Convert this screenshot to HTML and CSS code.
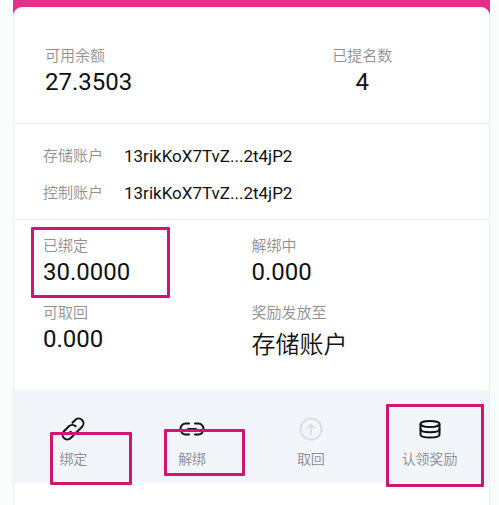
FILE: index.html
```
<!DOCTYPE html>
<html lang="zh-CN">
<head>
  <meta charset="UTF-8" />
  <meta name="viewport" content="width=device-width, initial-scale=1" />
  <title>绑定</title>
  <link rel="stylesheet" href="styles.css">
</head>
<body>
  <main class="page">
    <div class="card">
      <section class="summary">
        <div class="stat">
          <div class="label">可用余额</div>
          <div class="value">27.3503</div>
        </div>
        <div class="stat stat-center">
          <div class="label">已提名数</div>
          <div class="value">4</div>
        </div>
      </section>

      <section class="accounts">
        <div class="account">
          <span class="label">存储账户</span>
          <span class="address">13rikKoX7TvZ...2t4jP2</span>
        </div>
        <div class="account">
          <span class="label">控制账户</span>
          <span class="address">13rikKoX7TvZ...2t4jP2</span>
        </div>
      </section>

      <section class="details">
        <div class="stat">
          <div class="label">已绑定</div>
          <div class="value">30.0000</div>
          <span class="mark mark-bonded"></span>
        </div>
        <div class="stat">
          <div class="label">解绑中</div>
          <div class="value">0.000</div>
        </div>
        <div class="stat">
          <div class="label">可取回</div>
          <div class="value">0.000</div>
        </div>
        <div class="stat">
          <div class="label">奖励发放至</div>
          <div class="value value-text">存储账户</div>
        </div>
      </section>

      <nav class="actions">
        <button class="action" type="button">
          <svg class="icon" viewBox="0 0 26 26">
            <g transform="translate(13 13) rotate(-45)">
              <path d="M4-4.800H8a4.800 4.800 0 0 1 0 9.600H1a4.800 4.800 0 0 1-4.800-4.800" />
              <path d="M-4 4.800H-8a4.800 4.800 0 0 1 0-9.600H-1a4.800 4.800 0 0 1 4.800 4.800" />
            </g>
          </svg>
          绑定
          <span class="mark mark-bond"></span>
        </button>
        <button class="action" type="button">
          <svg class="icon" viewBox="0 0 26 26">
            <path d="M10 7.500H6.500a5 5.500 0 0 0 0 11H10" />
            <path d="M16 7.500h3.500a5 5.500 0 0 1 0 11H16" />
            <path d="M9 13h8" />
          </svg>
          解绑
          <span class="mark mark-unbond"></span>
        </button>
        <button class="action" type="button" disabled>
          <svg class="icon" viewBox="0 0 26 26">
            <circle cx="13" cy="13" r="10.500" />
            <path d="M13 18V9M9.500 12l3.500-3.500 3.500 3.500" />
          </svg>
          取回
        </button>
        <button class="action" type="button">
          <svg class="icon" viewBox="0 0 26 26">
            <ellipse cx="13" cy="8" rx="9.500" ry="3" />
            <path d="M3.500 8v10.500c0 2 4.200 3 9.500 3s9.500-1 9.500-3V8" />
            <path d="M3.500 13c0 2 4.200 3.200 9.500 3.200s9.500-1.200 9.500-3.200" />
          </svg>
          认领奖励
          <span class="mark mark-claim"></span>
        </button>
      </nav>
    </div>
  </main>
</body>
</html>
```

FILE: styles.css
```
* {
  box-sizing: border-box;
}
body {
  margin: 0;
  background: #fbfdfd;
  font-family: Roboto, "Noto Sans CJK SC", sans-serif;
  color: #111;
}
.page {
  min-height: 100vh;
  margin: 0 9px 0 13px;
  padding-top: 7px;
  background: linear-gradient(#e62e8b 16px, #fff 16px);
}
.card {
  min-height: calc(100vh - 7px);
  background: #fff;
  border: solid #edf0f3;
  border-width: 0 1px;
  border-radius: 9px 9px 0 0;
}
.label {
  font-size: 15px;
  font-weight: 350;
  line-height: 22px;
  color: #909090;
}
.value {
  font-size: 24px;
  line-height: 30px;
}
.value-text {
  padding-top: 6px;
  font-weight: 350;
}
.stat {
  position: relative;
}
.stat-center {
  text-align: center;
}
.summary {
  display: grid;
  grid-template-columns: 7fr 8fr;
  padding: 38px 0 26px;
  border-bottom: 1px solid #e8ebee;
}
.summary .stat:first-child {
  padding-left: 31px;
}
.accounts {
  display: grid;
  gap: 13px;
  padding: 20px 29px 14px;
  border-bottom: 1px solid #eef0f2;
}
.account {
  display: flex;
  align-items: center;
  gap: 21px;
}
.address {
  font-size: 17px;
  line-height: 24px;
}
.details {
  display: grid;
  grid-template-columns: 1fr 1fr;
  row-gap: 15px;
  padding: 15px 0 30px;
}
.details .stat:nth-child(odd) {
  padding-left: 29px;
}
.actions {
  display: grid;
  grid-template-columns: repeat(4, 1fr);
  padding: 26px 0 14px;
  background: #f2f5fa;
}
.action {
  position: relative;
  display: flex;
  flex-direction: column;
  align-items: center;
  gap: 7px;
  padding: 0;
  border: 0;
  background: none;
  font-family: inherit;
  font-size: 14px;
  font-weight: 350;
  line-height: 20px;
  color: #8a8c90;
  cursor: pointer;
}
.action:disabled {
  cursor: default;
}
.icon {
  width: 26px;
  height: 26px;
  fill: none;
  stroke: #111;
  stroke-width: 2;
  stroke-linecap: round;
  stroke-linejoin: round;
}
.action:disabled .icon {
  stroke: #dcdfe3;
}

/* highlight frames */
.mark {
  position: absolute;
  border: 3px solid #cf1673;
  border-radius: 1px;
  pointer-events: none;
}
.mark-bonded {
  top: -8px;
  left: 17px;
  width: 139px;
  height: 71px;
}
.mark-bond {
  top: 16px;
  left: 36px;
  width: 82px;
  height: 53px;
}
.mark-unbond {
  top: 13px;
  left: 31px;
  width: 81px;
  height: 47px;
}
.mark-claim {
  top: -12px;
  left: 16px;
  width: 98px;
  height: 83px;
}
```
